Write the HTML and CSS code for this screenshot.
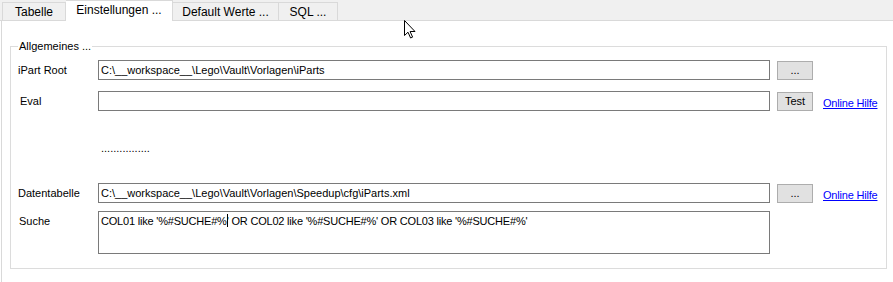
FILE: index.html
```html
<!DOCTYPE html>
<html lang="de">
<head>
    <meta charset="UTF-8">
    <title>Einstellungen</title>
    <link rel="stylesheet" href="styles.css">
</head>
<body>
    <div class="tabstrip">
        <div class="tab tab-first">Tabelle</div>
        <div class="tab active">Einstellungen ...</div>
        <div class="tab tab-defaults">Default Werte ...</div>
        <div class="tab tab-sql">SQL ...</div>
    </div>
    <div class="page">
        <div class="group">
            <span class="legend">Allgemeines ...</span>
            <div class="row first">
                <label class="label">iPart Root</label>
                <div class="textbox">C:\__workspace__\Lego\Vault\Vorlagen\iParts</div>
                <button class="btn">...</button>
            </div>
            <div class="row">
                <label class="label eval">Eval</label>
                <div class="textbox"></div>
                <button class="btn">Test</button>
                <a class="link" href="#">Online Hilfe</a>
            </div>
            <div class="dots">................</div>
            <div class="row">
                <label class="label">Datentabelle</label>
                <div class="textbox">C:\__workspace__\Lego\Vault\Vorlagen\Speedup\cfg\iParts.xml</div>
                <button class="btn">...</button>
                <a class="link" href="#">Online Hilfe</a>
            </div>
            <div class="row multi">
                <label class="label">Suche</label>
                <div class="textbox area">COL01 like '%#SUCHE#%<span class="caret"></span>' OR COL02 like '%#SUCHE#%' OR COL03 like '%#SUCHE#%'</div>
            </div>
        </div>
    </div>
    <!-- mouse pointer -->
    <svg class="pointer" width="13" height="19" viewBox="0 0 13 19">
        <path d="M0.5 0.5 L0.5 15.5 L4 12.2 L6.6 18 L8.6 17.1 L6.1 11.5 L11 11.5 Z" fill="#fff" stroke="#000" stroke-width="1"/>
    </svg>
</body>
</html>
```

FILE: styles.css
```css
body {
    margin: 0;
    background-color: #fff;
    font-family: 'Liberation Sans', Arial, sans-serif;
    font-size: 11px;
    color: #000;
    position: relative;
    height: 282px;
    overflow: hidden;
}

.tabstrip {
    display: flex;
    align-items: flex-end;
    height: 20px;
    padding-left: 2px;
    background-color: #f0f0f0;
    border-bottom: 1px solid #d9d9d9;
}

.tab {
    box-sizing: border-box;
    height: 18px;
    line-height: 19px;
    text-align: center;
    white-space: nowrap;
    border: 1px solid #d9d9d9;
    border-bottom: none;
    border-left: none;
    background-color: #f0f0f0;
    font-size: 12px;
}

.tab-first {
    width: 64px;
    border-left: 1px solid #d9d9d9;
}

.tab.active {
    width: 107px;
    height: 21px;
    line-height: 19px;
    margin-bottom: -1px;
    background-color: #fff;
}

.tab-defaults {
    width: 106px;
}

.tab-sql {
    width: 59px;
}

.page {
    margin-left: 1px;
    border-left: 1px solid #d9d9d9;
    padding: 25px 0 0 8px;
    height: 261px;
    box-sizing: border-box;
}

.group {
    position: relative;
    width: 877px;
    height: 223px;
    box-sizing: border-box;
    border: 1px solid #dcdcdc;
    padding-top: 13px;
}

.legend {
    position: absolute;
    top: -7px;
    left: 7px;
    padding: 0 1px;
    background-color: #fff;
    line-height: 13px;
}

.row {
    display: flex;
    align-items: center;
    height: 20px;
    margin-top: 11px;
}

.row.first {
    margin-top: 0;
}

.label {
    width: 80px;
    padding-left: 7px;
    flex-shrink: 0;
}

.label.eval {
    padding-left: 9px;
    width: 78px;
}

.textbox {
    width: 672px;
    height: 20px;
    box-sizing: border-box;
    border: 1px solid #7a7a7a;
    padding: 2px 0 0 2px;
    line-height: 15px;
    white-space: nowrap;
    flex-shrink: 0;
}

.btn {
    margin-left: 7px;
    width: 36px;
    height: 19px;
    padding: 0;
    border: 1px solid #adadad;
    background-color: #e1e1e1;
    font-family: inherit;
    font-size: 11px;
    color: #000;
}

.link {
    margin-left: 10px;
    color: #0000ff;
    text-decoration: underline;
    letter-spacing: -0.2px;
    margin-top: 3px;
}

.dots {
    margin: 31px 0 0 90px;
    height: 13px;
    line-height: 13px;
}

.dots + .row {
    margin-top: 28px;
}

.row.multi {
    align-items: flex-start;
    height: 43px;
    margin-top: 8px;
}

.row.multi .label {
    padding-top: 4px;
    padding-left: 8px;
    width: 79px;
}

.textbox.area {
    height: 43px;
    letter-spacing: -0.2px;
}

.caret {
    display: inline-block;
    width: 1px;
    height: 13px;
    margin-right: -1px;
    vertical-align: -2px;
    background-color: #000;
}

.pointer {
    position: absolute;
    left: 404px;
    top: 20px;
}
```
